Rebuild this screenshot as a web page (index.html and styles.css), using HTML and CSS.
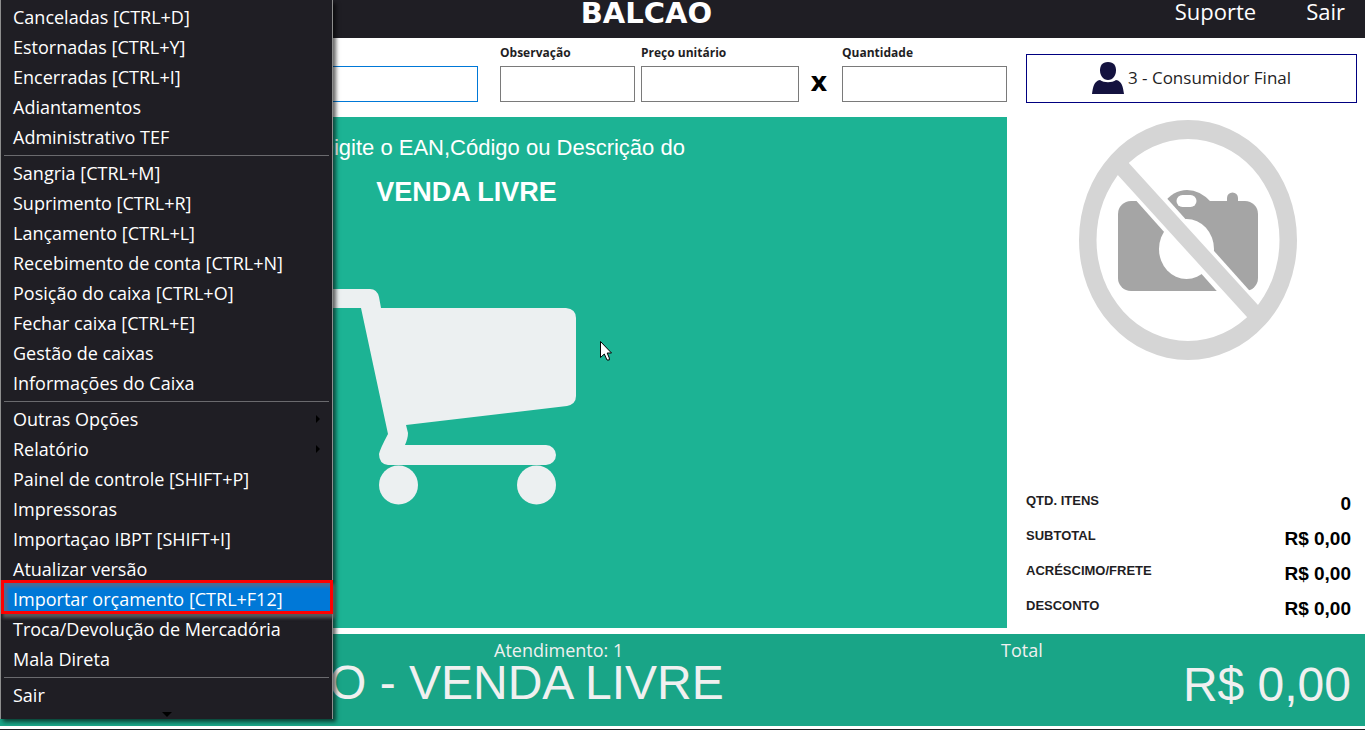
FILE: index.html
```
<!DOCTYPE html>
<html lang="pt-BR">
    <head>
        <title>Balcão</title>
        <meta charset="utf-8"/>
        <link rel="stylesheet" href="styles.css">
    </head>
    <body>
        <header class="topbar">
            <h1>BALCÃO</h1>
            <nav>
                <a href="#suporte">Suporte</a>
                <a href="#sair">Sair</a>
            </nav>
        </header>

        <main class="content">
            <section class="sale">
                <form class="fields" name="Itemform">
                    <div class="field product">
                        <input type="text" id="Produto" aria-label="Produto">
                    </div>
                    <div class="field note">
                        <label for="Observacao">Observação</label>
                        <input type="text" id="Observacao">
                    </div>
                    <div class="field price">
                        <label for="Preco">Preço unitário</label>
                        <input type="text" id="Preco">
                    </div>
                    <span class="times">x</span>
                    <div class="field amount">
                        <label for="Quantidade">Quantidade</label>
                        <input type="text" id="Quantidade">
                    </div>
                </form>

                <div class="panel">
                    <p class="hint">Digite o EAN,Código ou Descrição do</p>
                    <h2>VENDA LIVRE</h2>
                    <svg class="cart" viewBox="0 0 294 234" fill="#ecf0f1">
                        <path d="M0 9H50Q57 9 59 17L61 28H246Q256 29 256 38V116Q256 124 247 126L86 145L88 153Q88 158 85 165H226A10 10 0 0 1 226 185H68Q59 184 59 174Q60 169 68 154L41 28H0Z"/>
                        <circle cx="78.5" cy="205" r="19.5"/>
                        <circle cx="216.5" cy="205" r="19.5"/>
                    </svg>
                    <svg class="pointer" viewBox="0 0 12 20">
                        <path d="M.5 .5V16.5L4.3 13L7 19H9.3V17L7.2 12H11.5Z" fill="#fff" stroke="#000"/>
                    </svg>
                </div>
            </section>

            <aside class="side">
                <button type="button" class="customer">
                    <svg viewBox="0 0 32 34" fill="#14123f">
                        <path d="M16 1C10 1 8 5 8 9.500C8 14 11 19 16 19S24 14 24 9.500C24 5 22 1 16 1Z"/>
                        <path d="M8 19C2 20 1 26 0 33H32C31 26 30 20 24 19C20 22 12 22 8 19Z"/>
                    </svg>
                    <span>3 - Consumidor Final</span>
                </button>

                <svg class="no-photo" viewBox="0 0 218 240">
                    <g fill="#a5a5a5">
                        <rect x="39" y="81" width="140" height="90" rx="13"/>
                        <path d="M84 84Q94 70 108 70Q121 70 132 82V90H84Z"/>
                        <path d="M148 84V78A5.500 5.500 0 0 1 159 78V84Z"/>
                    </g>
                    <rect x="97.500" y="75" width="20" height="12" rx="6" fill="#fff"/>
                    <ellipse cx="107.500" cy="129" rx="27.500" ry="30" fill="#fff"/>
                    <path d="M36 21L80 69.500L178 179L152 187L45 67L30 50Z" fill="#fff"/>
                    <g fill="#d5d5d5">
                        <path d="M42 34L50 43.300L179 185L186 193L175 205L168 197L39 55.300L31 46Z"/>
                        <path fill-rule="evenodd" d="M0 120A109 120 0 0 1 218 120A109 120 0 0 1 0 120ZM17.500 120A91.500 101 0 0 0 200.500 120A91.500 101 0 0 0 17.500 120Z"/>
                    </g>
                </svg>

                <dl class="totals">
                    <div><dt>QTD. ITENS</dt><dd>0</dd></div>
                    <div><dt>SUBTOTAL</dt><dd>R$ 0,00</dd></div>
                    <div><dt>ACRÉSCIMO/FRETE</dt><dd>R$ 0,00</dd></div>
                    <div><dt>DESCONTO</dt><dd>R$ 0,00</dd></div>
                </dl>
            </aside>
        </main>

        <footer class="status">
            <div class="session">
                <p>Atendimento: 1</p>
                <strong>O - VENDA LIVRE</strong>
            </div>
            <div class="total">
                <p>Total</p>
                <strong>R$ 0,00</strong>
            </div>
        </footer>

        <div class="menu">
            <button type="button">Canceladas [CTRL+D]</button>
            <button type="button">Estornadas [CTRL+Y]</button>
            <button type="button">Encerradas [CTRL+I]</button>
            <button type="button">Adiantamentos</button>
            <button type="button">Administrativo TEF</button>
            <hr>
            <button type="button">Sangria [CTRL+M]</button>
            <button type="button">Suprimento [CTRL+R]</button>
            <button type="button">Lançamento [CTRL+L]</button>
            <button type="button">Recebimento de conta [CTRL+N]</button>
            <button type="button">Posição do caixa [CTRL+O]</button>
            <button type="button">Fechar caixa [CTRL+E]</button>
            <button type="button">Gestão de caixas</button>
            <button type="button">Informações do Caixa</button>
            <hr>
            <button type="button" class="submenu">Outras Opções</button>
            <button type="button" class="submenu">Relatório</button>
            <button type="button">Painel de controle [SHIFT+P]</button>
            <button type="button">Impressoras</button>
            <button type="button">Importaçao IBPT [SHIFT+I]</button>
            <button type="button">Atualizar versão</button>
            <button type="button" class="selected">Importar orçamento [CTRL+F12]</button>
            <button type="button">Troca/Devolução de Mercadória</button>
            <button type="button">Mala Direta</button>
            <hr>
            <button type="button">Sair</button>
            <div class="more"></div>
        </div>
    </body>
</html>
```
FILE: styles.css
```
* {
  box-sizing: border-box; }
body {
  margin: 0;
  min-height: 100vh;
  display: flex;
  flex-direction: column;
  position: relative;
  overflow-x: hidden;
  background: #fff;
  border-bottom: 1px solid #1f1e24;
  font-family: "Open Sans", sans-serif; }
h1, h2, p, dl, dd {
  margin: 0; }
button {
  font-family: inherit;
  cursor: pointer; }

.topbar {
  display: flex;
  height: 38px;
  background: #1f1e24;
  color: #fff; }
.topbar h1 {
  flex: 1;
  padding-left: 118px;
  font-family: "DejaVu Sans", sans-serif;
  font-size: 29px;
  line-height: 26px;
  text-align: center; }
.topbar nav {
  display: flex;
  gap: 50px;
  padding-right: 20px; }
.topbar a {
  color: #fff;
  font-size: 22px;
  line-height: 22px;
  text-decoration: none; }

.content {
  flex: 1;
  display: grid;
  grid-template-columns: 1fr 358px; }
.sale {
  display: flex;
  flex-direction: column; }
.fields {
  display: flex;
  align-items: flex-end;
  height: 79px;
  padding-bottom: 15px; }
.field {
  display: flex;
  flex-direction: column; }
.field label {
  color: #1f1e24;
  font-size: 12px;
  font-weight: bold;
  line-height: 26px; }
.field input {
  width: 100%;
  height: 36px;
  border: 1px solid #7a7a7a;
  padding: 0 8px;
  font-size: 18px; }
.product {
  flex: 1;
  margin-right: 22px; }
.product input {
  border-color: #0078d7; }
.note {
  width: 135px;
  margin-right: 6px; }
.price {
  width: 158px; }
.amount {
  width: 165px; }
.times {
  width: 43px;
  padding-right: 3px;
  font-family: "DejaVu Sans", sans-serif;
  font-size: 26px;
  font-weight: bold;
  line-height: 40px;
  text-align: center; }

.panel {
  flex: 1;
  position: relative;
  display: flex;
  flex-direction: column;
  align-items: center;
  padding-top: 17px;
  background: #1cb394;
  color: #fff;
  font-family: "Liberation Sans", sans-serif; }
.hint {
  margin-right: 4px;
  font-size: 22px;
  line-height: 28px; }
.panel h2 {
  margin: 14px 74px 0 0;
  font-size: 27px;
  line-height: 32px; }
.cart {
  width: 294px;
  margin: 72px 74px 0 0; }
/* mouse pointer over the sale panel */
.pointer {
  position: absolute;
  left: 600px;
  top: 224px;
  width: 12px;
  height: 20px; }

.side {
  display: flex;
  flex-direction: column;
  padding: 16px 8px 0 19px; }
.customer {
  display: flex;
  align-items: center;
  justify-content: center;
  gap: 4px;
  height: 49px;
  padding: 0 6px 2px;
  border: 1px solid #000080;
  background: #fff;
  color: #1f1e24;
  font-size: 17px; }
.customer svg {
  width: 32px;
  height: 34px; }
.no-photo {
  align-self: center;
  width: 218px;
  margin: 17px 8px 0 0; }
.totals {
  margin-top: auto;
  padding-right: 6px;
  font-family: "Liberation Sans", sans-serif;
  font-weight: bold; }
.totals div {
  display: flex;
  justify-content: space-between;
  height: 35px;
  padding-top: 3px; }
.totals dt {
  color: #1f1e24;
  font-size: 13px;
  line-height: 20px; }
.totals dd {
  color: #000;
  font-size: 19px;
  line-height: 26px; }

.status {
  display: flex;
  height: 92px;
  margin: 6px 0 3px;
  background: #19a587;
  color: #f0f0f0; }
.status p {
  font-size: 18px;
  line-height: 32px; }
.status strong {
  display: block;
  font-family: "Liberation Sans", sans-serif;
  font-size: 48px;
  font-weight: normal; }
.session {
  flex: 1;
  padding-left: 329px; }
.session p {
  padding-left: 165px; }
.session strong {
  line-height: 34px; }
.total {
  width: 364px;
  padding-right: 14px; }
.total strong {
  line-height: 38px;
  text-align: right; }

/* open menu, lies over the sale screen */
.menu {
  position: absolute;
  left: 0;
  top: 0;
  width: 333px;
  padding-top: 2px;
  border: solid #8e8e8e;
  border-width: 0 1px;
  background: #1f1e24;
  box-shadow: 3px 3px 4px rgba(0, 0, 0, 0.6); }
.menu button {
  display: block;
  width: 100%;
  height: 30px;
  padding: 0 12px;
  border: 0;
  background: none;
  color: #fff;
  font-size: 18px;
  line-height: 30px;
  text-align: left; }
.menu hr {
  height: 1px;
  margin: 3px 3px 2px;
  border: 0;
  background: #6a6a6e; }
.menu .selected {
  position: relative;
  background: #0078d7; }
/* red frame round the selected item */
.selected::after {
  content: "";
  position: absolute;
  inset: -4px -1px 0 0;
  border: 3px solid #f00;
  box-shadow: 2px 4px 3px rgba(110, 110, 110, 0.7), inset 4px 4px 3px #4a6d96; }
.menu .submenu {
  display: flex;
  align-items: center;
  justify-content: space-between; }
.submenu::after {
  content: "";
  border: 4px solid transparent;
  border-left-color: #000;
  border-right: 0; }
.more {
  width: 10px;
  height: 9px;
  margin: 0 auto;
  padding-top: 2px; }
.more::after {
  content: "";
  display: block;
  border: 5px solid transparent;
  border-top-color: #000;
  border-bottom: 0; }
```
